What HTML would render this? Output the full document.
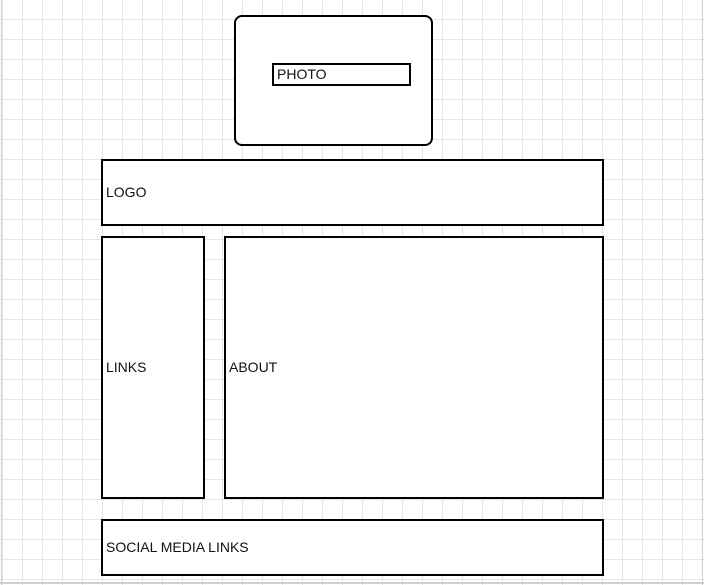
<!DOCTYPE html>
<html><head><style>
html,body{margin:0;padding:0}
body{width:704px;height:585px;position:relative;overflow:hidden;background-color:#fff;
background-image:
linear-gradient(to right,#e6e6e6 1px,transparent 1px),
linear-gradient(to bottom,#e6e6e6 1px,transparent 1px);
background-size:20px 20px,20px 20px;
background-position:2px -1px,2px -1px;
font-family:"Liberation Sans",Arial,sans-serif;font-size:14px;color:#111}
.b{position:absolute;box-sizing:border-box;border:2px solid #000;background:#fff;display:flex;align-items:center;padding-left:3px;padding-bottom:2px}
.e{position:absolute;background:#d0d0d0}
</style></head><body>
<div class="e" style="left:1px;top:0;width:1px;height:585px"></div>
<div class="e" style="left:702px;top:0;width:1px;height:585px"></div>
<div class="e" style="left:0;top:582px;width:704px;height:2px"></div>
<div class="b" style="left:234px;top:15px;width:199px;height:131px;border-radius:8px"></div>
<div class="b" style="left:272px;top:63px;width:139px;height:23px;padding-left:3px">PHOTO</div>
<div class="b" style="left:101px;top:159px;width:503px;height:67px">LOGO</div>
<div class="b" style="left:101px;top:236px;width:104px;height:263px">LINKS</div>
<div class="b" style="left:224px;top:236px;width:380px;height:263px">ABOUT</div>
<div class="b" style="left:101px;top:519px;width:503px;height:57px">SOCIAL MEDIA LINKS</div>
</body></html>
